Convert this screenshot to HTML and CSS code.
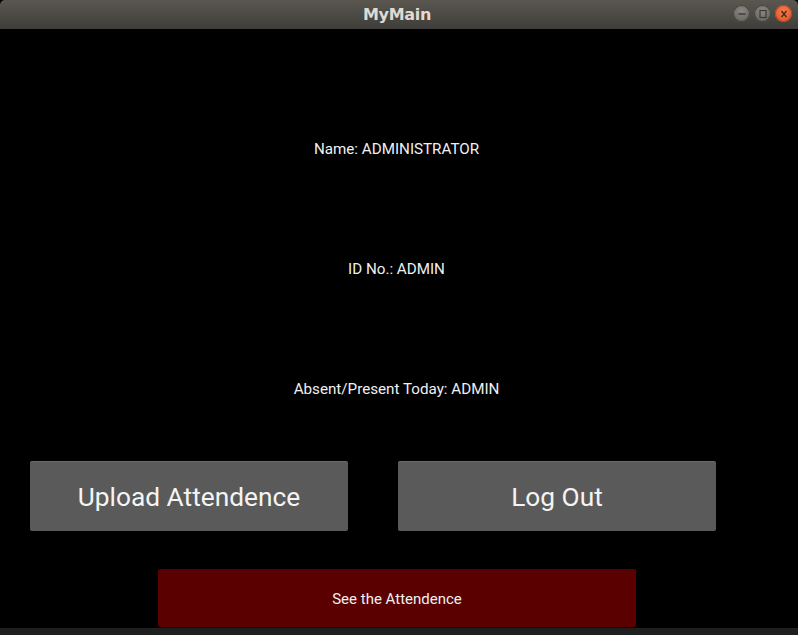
FILE: index.html
```html
<!DOCTYPE html>
<html>
<head>
<meta charset="utf-8">
<link rel="stylesheet" href="styles.css">
</head>
<body>
<div class="window">
  <div class="titlebar">
    <span class="title">MyMain</span>
    <div class="controls">
      <span class="ctl ctl-min"><svg width="16" height="16" viewBox="0 0 16 16"><line x1="4.5" y1="8" x2="11.5" y2="8" stroke="#3a3935" stroke-width="1.4"/></svg></span>
      <span class="ctl ctl-max"><svg width="16" height="16" viewBox="0 0 16 16"><rect x="5" y="4.5" width="6" height="7" fill="none" stroke="#3a3935" stroke-width="1.2"/></svg></span>
      <span class="ctl ctl-close"><svg width="16" height="16" viewBox="0 0 16 16"><path d="M5.5 5 L10.5 11 M10.5 5 L5.5 11" stroke="#3a2a20" stroke-width="1.3"/></svg></span>
    </div>
  </div>
  <div class="content">
    <div class="labels">
      <div class="label">Name: ADMINISTRATOR</div>
      <div class="label">ID No.: ADMIN</div>
      <div class="label">Absent/Present Today: ADMIN</div>
    </div>
    <div class="btn-row">
      <div class="btn">Upload Attendence</div>
      <div class="btn">Log Out</div>
    </div>
    <div class="red-row">
      <div class="btn-red">See the Attendence</div>
    </div>
  </div>
  <div class="bottom-strip"></div>
</div>
</body>
</html>
```
FILE: styles.css
```css
html, body {
  margin: 0;
  padding: 0;
  background: #000;
}
.window {
  width: 798px;
  height: 635px;
  display: flex;
  flex-direction: column;
  overflow: hidden;
}
.titlebar {
  height: 29px;
  flex: none;
  background: linear-gradient(#5a5750, #3e3d39);
  border-radius: 5px 5px 0 0;
  position: relative;
  display: flex;
  align-items: center;
  justify-content: center;
}
.title {
  font-family: "DejaVu Sans", "Noto Sans", sans-serif;
  font-weight: bold;
  font-size: 16px;
  color: #dfdbd2;
  letter-spacing: -0.3px;
  margin-left: -4px;
}
.controls {
  position: absolute;
  right: 6px;
  top: 5px;
  display: flex;
  gap: 4px;
}
.ctl {
  width: 17px;
  height: 17px;
  border-radius: 50%;
  display: flex;
  align-items: center;
  justify-content: center;
}
.ctl-min, .ctl-max {
  background: radial-gradient(circle at 50% 35%, #8a8883, #5e5c57);
  box-shadow: inset 0 0 0 1px #44433f;
}
.ctl-close {
  background: radial-gradient(circle at 50% 35%, #f47a4b, #e0511d);
  box-shadow: inset 0 0 0 1px #b8461c;
}
.content {
  flex: none;
  height: 599px;
  background: #000;
  display: flex;
  flex-direction: column;
  padding-top: 60px;
  box-sizing: border-box;
}
.labels {
  display: flex;
  flex-direction: column;
  padding-right: 5px;
}
.label {
  height: 120px;
  display: flex;
  align-items: center;
  justify-content: center;
  font-family: Roboto, "Liberation Sans", sans-serif;
  font-size: 15.2px;
  color: #f0f0f0;
}
.btn-row {
  margin-top: 12px;
  display: flex;
  gap: 50px;
  padding-left: 30px;
}
.btn {
  width: 318px;
  height: 70px;
  background: #5a5a5a;
  border-radius: 2px;
  border-top: 1px solid #6a6a6a;
  box-sizing: border-box;
  display: flex;
  align-items: center;
  justify-content: center;
  font-family: Roboto, "Liberation Sans", sans-serif;
  font-size: 26.3px;
  color: #f4f4f4;
}
.red-row {
  margin-top: 38px;
  display: flex;
  padding-left: 158px;
}
.btn-red {
  width: 478px;
  height: 58px;
  background: #5a0000;
  border-radius: 2px;
  display: flex;
  align-items: center;
  justify-content: center;
  font-family: Roboto, "Liberation Sans", sans-serif;
  font-size: 15px;
  color: #f0f0f0;
  padding-top: 2px;
  box-sizing: border-box;
}
.bottom-strip {
  flex: 1;
  background: #1f1f1f;
}
```
